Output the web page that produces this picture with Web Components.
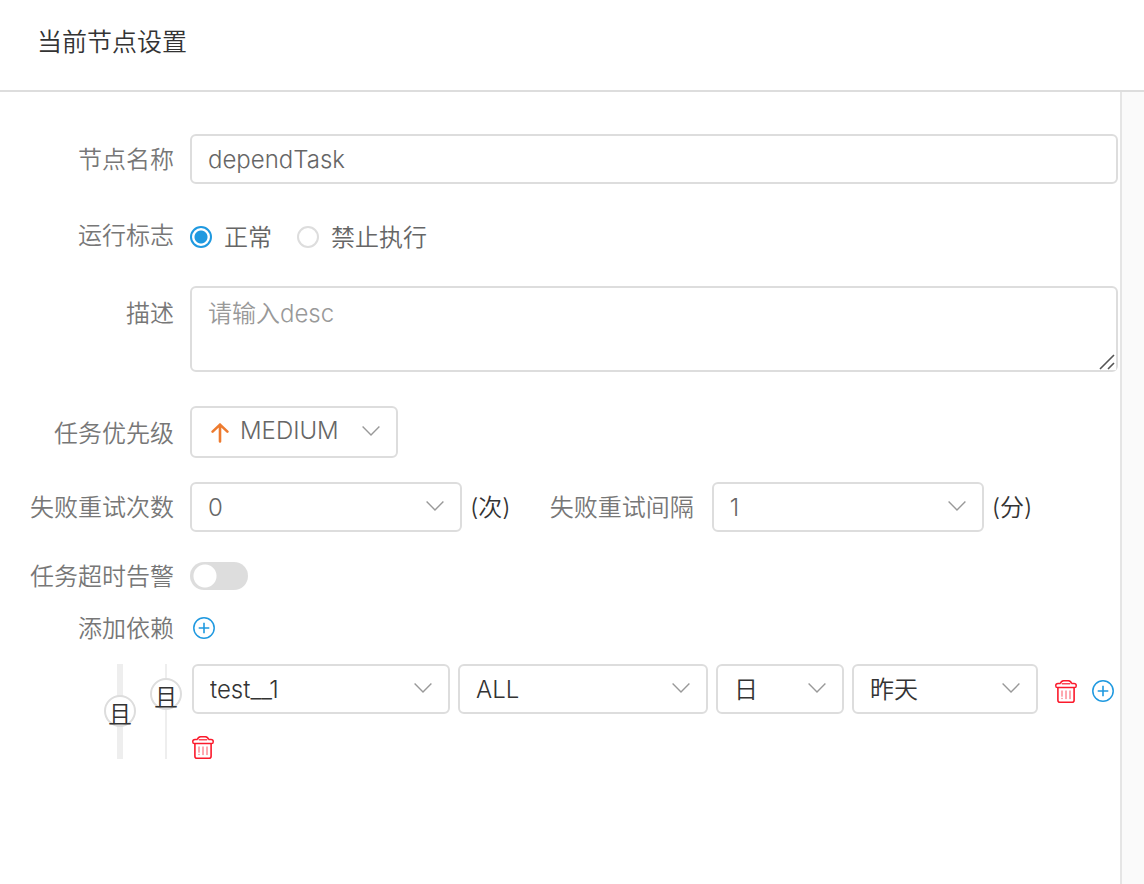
<!DOCTYPE html>
<html lang="zh-CN">
<head>
<meta charset="utf-8">
<meta name="viewport" content="width=device-width, initial-scale=1">
<title>当前节点设置</title>
<style>
  body { margin: 0; background: #fff; color: #333; font-family: Inter, "Noto Sans CJK SC", sans-serif; font-size: 24px; font-weight: 350; line-height: 32px; }
</style>
</head>
<body>
<node-panel heading="当前节点设置">
  <text-field label="节点名称" value="dependTask"></text-field>
  <radio-field label="运行标志" options="正常,禁止执行" value="正常"></radio-field>
  <area-field label="描述" placeholder="请输入desc"></area-field>
  <priority-field label="任务优先级" value="MEDIUM"></priority-field>
  <retry-row></retry-row>
  <switch-field label="任务超时告警"></switch-field>
  <depend-field label="添加依赖"></depend-field>
</node-panel>

<script>
const shared = `
  * { box-sizing: border-box; }
  :host { display: block; }
  input, textarea, select, button { font: inherit; color: inherit; margin: 0; }
  .row { display: grid; grid-template-columns: 174px minmax(0, 1fr); column-gap: 16px; align-items: center; }
  .label { color: #777; text-align: right; white-space: nowrap; padding-top: var(--label-top, 2px); }
  .box { display: block; width: 100%; border: 2px solid #ddd; border-radius: 6px; background: #fff; color: #666; padding: 0 16px; outline: none; }
  button { display: inline-flex; padding: 0; border: 0; background: none; cursor: pointer; }
`;

const PLUS = `<svg width="22" height="22" viewBox="0 0 22 22" fill="none" stroke="#1f99e0"><circle cx="11" cy="11" r="10.2" stroke-width="1.5"/><path d="M11 5.7v10.6M5.7 11h10.6" stroke-width="1.6"/></svg>`;
const TRASH = `<svg width="22" height="23" viewBox="0 0 22 23" fill="none" stroke="#fb1a2c"><path d="M5.4 3.6Q6 1 8.6.8h4.8Q16 1 16.6 3.6" stroke-width="1.5"/><path d="M6.8 3.8h8.4" stroke-width="1.2"/><path d="M5.6 3.6H3Q.8 3.6.8 5.4V6q0 1.6 1.6 1.6h17.2q1.6 0 1.6-1.6v-.6q0-1.8-2.2-1.8h-2.6" stroke-width="1.5"/><path d="M2.9 7.8v12.4q0 2 2 2h12.2q2 0 2-2V7.8" stroke-width="1.6"/><path d="M7 10.5v6.2M7 17.9v1.2M11 10.5v8.6M15 10.5v8.6" stroke-width="1" stroke-opacity=".75"/></svg>`;

function define(name, render) {
  customElements.define(name, class extends HTMLElement {
    constructor() {
      super();
      this.attachShadow({ mode: 'open' });
    }
    connectedCallback() {
      const get = key => this.getAttribute(key) || '';
      this.shadowRoot.innerHTML = render(get);
    }
  });
}

define('node-panel', get => `
  <style>${shared}
    :host { display: flex; flex-direction: column; min-height: 100vh; }
    header { padding: 26px 37px 32px; border-bottom: 2px solid #ddd; }
    h1 { margin: 0; font-size: 25px; line-height: 32px; font-weight: inherit; }
    .body { flex: 1; display: flex; }
    main { flex: 1; min-width: 0; padding: 42px 0; }
    aside { width: 24px; border-left: 2px solid #e5e5e5; background: #fafafa; }
  </style>
  <header><h1>${get('heading')}</h1></header>
  <div class="body"><main><slot></slot></main><aside></aside></div>
`);

define('text-field', get => `
  <style>${shared}
    :host { padding-right: 2px; margin-bottom: 24px; }
    .box { height: 50px; }
  </style>
  <div class="row">
    <label class="label" for="f">${get('label')}</label>
    <input class="box" id="f" type="text" value="${get('value')}">
  </div>
`);

define('radio-field', get => `
  <style>${shared}
    :host { margin-bottom: 24px; }
    .row { min-height: 54px; }
    .options { display: flex; gap: 25px; color: #666; padding-top: 4px; }
    .options label { display: flex; align-items: center; gap: 12px; }
    .options span { padding-top: 2px; }
    input { appearance: none; width: 22px; height: 22px; border: 2px solid #ddd; border-radius: 50%; }
    input:checked { border-color: #1f99e0; background: radial-gradient(circle, #1f99e0 6px, #fff 7px); }
  </style>
  <div class="row" role="radiogroup" aria-labelledby="g">
    <span class="label" id="g">${get('label')}</span>
    <div class="options">
      ${get('options').split(',').map(o => `<label><input type="radio" name="flag"${o === get('value') ? ' checked' : ''}><span>${o}</span></label>`).join('')}
    </div>
  </div>
`);

define('area-field', get => `
  <style>${shared}
    :host { padding-right: 2px; margin-bottom: 34px; --label-top: 12px; }
    .row { align-items: start; }
    .wrap { position: relative; }
    .box { height: 86px; padding: 10px 16px; resize: vertical; }
    .box::placeholder { color: #999; }
    .box::-webkit-resizer { background: #fff; }
    svg { position: absolute; right: 3px; bottom: 2px; pointer-events: none; }
  </style>
  <div class="row">
    <label class="label" for="f">${get('label')}</label>
    <div class="wrap">
      <textarea class="box" id="f" placeholder="${get('placeholder')}"></textarea>
      <svg width="16" height="16" viewBox="0 0 16 16" fill="none" stroke="#555" stroke-width="1.6"><path d="M1 15 15 1M9 15l6-6"/></svg>
    </div>
  </div>
`);

define('select-box', get => `
  <style>${shared}
    :host { position: relative; min-width: 0; }
    select.box { appearance: none; height: var(--box-height, 50px); color: var(--box-color, #666); padding: var(--box-pad, 2px 40px 0 16px); text-overflow: ellipsis; }
    .chevron { position: absolute; right: 18px; top: 50%; margin-top: -6px; pointer-events: none; }
    ::slotted(svg) { position: absolute; left: 21px; top: 17px; pointer-events: none; }
  </style>
  <select class="box" aria-label="${get('label')}"><option>${get('value')}</option></select>
  <slot></slot>
  <svg class="chevron" width="18" height="10" viewBox="0 0 18 10" fill="none" stroke="#999" stroke-width="1.4"><path d="M.6.6 9 9 17.4.6"/></svg>
`);

define('priority-field', get => `
  <style>${shared}
    :host { margin-bottom: 24px; --label-top: 4px; }
    select-box { width: 208px; --box-height: 52px; --box-pad: 0 40px 2px 48px; }
  </style>
  <div class="row">
    <span class="label">${get('label')}</span>
    <select-box label="${get('label')}" value="${get('value')}"><svg width="18" height="20" viewBox="0 0 18 20" fill="none" stroke="#ed7b2f" stroke-width="2.6" stroke-linecap="round" stroke-linejoin="round"><path d="M9 18.4V1.6M1.6 8.6 9 1.6l7.4 7"/></svg></select-box>
  </div>
`);

define('retry-row', () => `
  <style>${shared}
    :host { margin-bottom: 24px; }
    .fields { display: flex; align-items: center; gap: 8px; white-space: nowrap; }
    .unit { padding-top: 2px; }
    select-box { flex: 0 1 272px; }
    .next { padding-left: 31px; padding-right: 10px; }
  </style>
  <div class="row">
    <span class="label">失败重试次数</span>
    <div class="fields">
      <select-box label="失败重试次数" value="0"></select-box><span class="unit">(次)</span>
      <span class="label next">失败重试间隔</span>
      <select-box label="失败重试间隔" value="1"></select-box><span class="unit">(分)</span>
    </div>
  </div>
`);

define('switch-field', get => `
  <style>${shared}
    :host { margin-bottom: 12px; }
    .row { min-height: 40px; }
    input { appearance: none; width: 58px; height: 28px; border-radius: 14px; background: radial-gradient(circle at 15px 14px, #fff 11px, #ddd 12px); }
  </style>
  <div class="row">
    <label class="label" for="f">${get('label')}</label>
    <input id="f" type="checkbox" role="switch">
  </div>
`);

define('relation-group', get => `
  <style>${shared}
    :host { display: grid; grid-template-columns: 32px minmax(0, 1fr); }
    .rail { display: grid; justify-items: center; }
    .rail > * { grid-area: 1 / 1; }
    .line { width: var(--line, 2px); background: #eee; }
    button { width: 32px; height: 32px; align-self: var(--knob-align, start); margin-top: var(--knob-top, 0px); justify-content: center; border: 2px solid #ddd; border-radius: 50%; background: #fff; padding-top: 4px; line-height: 28px; }
  </style>
  <div class="rail"><span class="line"></span><button type="button">${get('relation')}</button></div>
  <slot></slot>
`);

define('depend-field', get => `
  <style>${shared}
    .row { min-height: 40px; margin-bottom: 16px; }
    .row button { margin-left: 3px; justify-self: start; }
    .outer { margin-left: 104px; column-gap: 14px; --line: 6px; --knob-align: center; --knob-top: -2px; }
    .inner { column-gap: 10px; --line: 2px; --knob-align: start; --knob-top: 14px; }
    .items { display: grid; row-gap: 22px; justify-items: start; --box-color: #333; }
    .item { display: flex; align-items: center; gap: 8px; width: 100%; padding-right: 6px; }
    .tools { display: flex; align-items: center; gap: 15px; padding: 4px 0 0 9px; }
  </style>
  <div class="row">
    <span class="label">${get('label')}</span>
    <button type="button" aria-label="添加">${PLUS}</button>
  </div>
  <relation-group class="outer" relation="且">
    <relation-group class="inner" relation="且">
      <div class="items">
        <div class="item">
          <select-box style="flex:258 1 0" label="工作流" value="test__1"></select-box>
          <select-box style="flex:250 1 0" label="任务" value="ALL"></select-box>
          <select-box style="flex:128 1 0" label="周期" value="日"></select-box>
          <select-box style="flex:186 1 0" label="时间" value="昨天"></select-box>
          <div class="tools">
            <button type="button" aria-label="删除">${TRASH}</button>
            <button type="button" aria-label="添加">${PLUS}</button>
          </div>
        </div>
        <button type="button" aria-label="删除">${TRASH}</button>
      </div>
    </relation-group>
  </relation-group>
`);
</script>
</body>
</html>
